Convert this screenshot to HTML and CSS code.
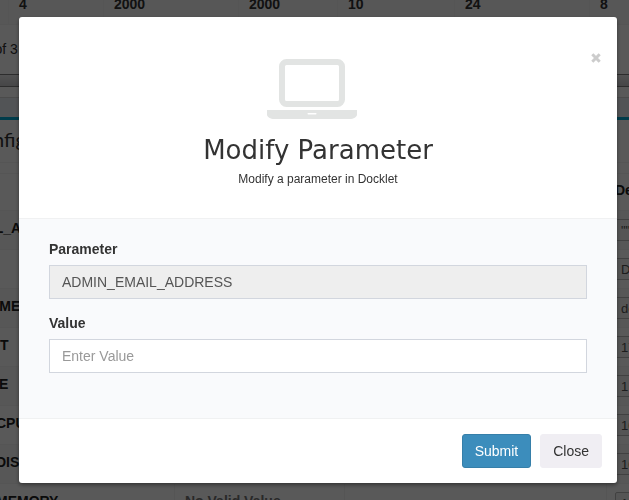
FILE: index.html
```
<!DOCTYPE html>
<html lang="en">
<head>
<meta charset="utf-8">
<title>Modify Parameter</title>
<link rel="stylesheet" href="styles.css">
</head>
<body>
<main class="page">
  <table class="grid limits">
    <tbody><tr><td></td><td>4</td><td>2000</td><td>2000</td><td>10</td><td>24</td><td>8</td></tr></tbody>
  </table>
  <p class="count">Showing 1 to 3 of 3</p>
  <div class="splitter"></div>
  <div class="strip"></div>
  <section class="box">
    <h2 class="box-title">Docklet Config</h2>
    <table class="grid config">
      <thead><tr><th></th><th></th><th></th><th>Default</th></tr></thead>
      <tbody>
        <tr><td>ADMIN_EMAIL_ADDRESS</td><td></td><td></td><td><input aria-label="Default 1" value='""'></td></tr>
        <tr><td>TITLE</td><td></td><td></td><td><input aria-label="Default 2" value="Docklet"></td></tr>
        <tr><td>MACHINE_NAME</td><td></td><td></td><td><input aria-label="Default 3" value="docklet"></td></tr>
        <tr><td>IDLE_TIMEOUT</td><td></td><td></td><td><input aria-label="Default 4" value="17"></td></tr>
        <tr><td>DEFAULT_SIZE</td><td></td><td></td><td><input aria-label="Default 5" value="1"></td></tr>
        <tr><td>CONTAINER_CPU</td><td></td><td></td><td><input aria-label="Default 6" value="10"></td></tr>
        <tr><td>CONTAINER_DISK</td><td></td><td></td><td><input aria-label="Default 7" value="10"></td></tr>
        <tr><td>CONTAINER_MEMORY</td><td class="empty">No Valid Value</td><td></td><td><input aria-label="Default 8" value="10"></td></tr>
      </tbody>
    </table>
  </section>
</main>
<div class="backdrop">
  <form class="modal" role="dialog" aria-labelledby="title">
    <header class="modal-header">
      <button class="dismiss" type="button" aria-label="Dismiss">
        <svg width="10" height="10" viewBox="0 0 10 10"><path d="M1.300 1.300l7.400 7.400M8.700 1.300l-7.400 7.400" stroke="currentColor" stroke-width="3"/></svg>
      </button>
      <svg class="laptop" width="90" height="60" viewBox="0 0 90 60" fill="currentColor" fill-rule="evenodd">
        <path d="M19.500 0h51a7.500 7.500 0 0 1 7.500 7.500v33a7.500 7.500 0 0 1-7.500 7.500h-51a7.500 7.500 0 0 1-7.500-7.500v-33a7.500 7.500 0 0 1 7.500-7.500zM19.500 6a1.500 1.500 0 0 0-1.500 1.500v33a1.500 1.500 0 0 0 1.500 1.500h51a1.500 1.500 0 0 0 1.500-1.500v-33a1.500 1.500 0 0 0-1.500-1.500z"/>
        <path d="M0 51h90v4.500c0 2.500-3.400 4.500-7.500 4.500h-75c-4.100 0-7.500-2-7.500-4.500zM41.200 54a.7.7 0 0 0 0 1.500h7.600a.7.7 0 0 0 0-1.500z"/>
      </svg>
      <h1 class="title" id="title">Modify Parameter</h1>
      <p class="subtitle">Modify a parameter in Docklet</p>
    </header>
    <div class="modal-body">
      <div class="field">
        <label for="param">Parameter</label>
        <input id="param" type="text" value="ADMIN_EMAIL_ADDRESS" readonly>
      </div>
      <div class="field">
        <label for="value">Value</label>
        <input id="value" type="text" placeholder="Enter Value">
      </div>
    </div>
    <footer class="modal-footer">
      <button class="btn primary" type="submit">Submit</button>
      <button class="btn" type="button">Close</button>
    </footer>
  </form>
</div>
</body>
</html>
```
FILE: styles.css
```
* { box-sizing: border-box; }
html, body { height: 100%; }
body {
  margin: 0;
  overflow: hidden;
  color: #333;
  background: #fff;
  font: 14px/20px "Liberation Sans", Arial, sans-serif;
}
input, button { font: inherit; }

/* Page behind the dialog, scrolled to the right */
.page {
  height: 100%;
  overflow: hidden;
  margin-left: -105px;
  margin-right: -200px;
}
.grid {
  width: 100%;
  table-layout: fixed;
  border-collapse: collapse;
  font-weight: bold;
}
.grid td, .grid th {
  padding: 0 10px;
  border: 1px solid #f4f4f4;
  text-align: left;
}
.limits tr { height: 32px; background: #f9f9f9; }
.limits { margin-top: -8px; color: #333; }
.limits td { padding-bottom: 10px; }
.limits td:nth-child(1) { width: 113px; }
.limits td:nth-child(2) { width: 95px; }
.limits td:nth-child(3) { width: 135px; }
.limits td:nth-child(4) { width: 99px; }
.limits td:nth-child(5) { width: 117px; }
.limits td:nth-child(6) { width: 135px; }
.count { margin: 0; padding: 14px 3px 15px; }
.splitter {
  height: 13px;
  border: 1px solid #808080;
  background: linear-gradient(#eee, #c8c8cc);
}
.strip {
  height: 20px;
  margin-top: 10px;
  border-top: 1px solid #d8d8d8;
  background: #ecf0f5;
}
.box { border-top: 3px solid #00acd6; background: #fff; }
.box-title {
  margin: 0 0 10px;
  padding: 8px 0 12px;
  border-bottom: 1px solid #f4f4f4;
  font: 20px/22px Lato, sans-serif;
}
.config th { height: 37px; }
.config th:nth-child(1) { width: 279px; }
.config th:nth-child(2) { width: 170px; }
.config th:nth-child(3) { width: 262px; }
.config th, .config td:first-child { color: #222; }
.config td { height: 39px; }
.grid.config th, .config tr > :nth-child(-n+2) { padding-bottom: 5px; }
.config tbody tr:nth-child(odd) { background: #f9f9f9; }
.config .empty { color: #777; }
.config input {
  display: block;
  width: 100%;
  height: 22px;
  padding: 0 5px;
  border: 1px solid #bbb;
  border-radius: 2px;
  background: #f4f4f4;
  color: #555;
  font-size: 13px;
  font-weight: normal;
}
.config tr > :last-child { padding-left: 8px; }

/* Dialog */
.backdrop {
  position: fixed;
  inset: 0;
  padding: 17px 12px 17px 19px;
  background: rgba(0, 0, 0, .65);
}
.modal {
  overflow: hidden;
  border-radius: 3px;
  background: #fff;
  box-shadow: 0 2px 4px rgba(0, 0, 0, .4);
}
.modal-header {
  position: relative;
  display: flex;
  flex-direction: column;
  align-items: center;
  padding: 42px 15px 29px;
}
.dismiss {
  position: absolute;
  top: 36px;
  right: 16px;
  display: flex;
  padding: 0;
  border: 0;
  background: none;
  color: #ccc;
}
.laptop { margin-right: 12px; color: #e2e4e3; }
.title {
  margin: 16px 0 0;
  font: 26px/30px "DejaVu Sans", sans-serif;
}
.subtitle { margin: 4px 0 0; font-size: 12px; }
.modal-body {
  padding: 20px 30px 31px;
  border-top: 1px solid #f0f1f2;
  border-bottom: 1px solid #f0f1f2;
  background: #f9fafc;
}
.field { margin-bottom: 14px; }
.field label { display: block; margin-bottom: 6px; font-weight: bold; }
.field input {
  display: block;
  width: 100%;
  height: 34px;
  padding: 6px 12px;
  border: 1px solid #d2d6de;
  border-radius: 0;
  background: #fff;
  color: #555;
}
.field input:read-only { background: #eee; }
.field input::placeholder { color: #999; }
.modal-footer {
  display: flex;
  justify-content: flex-end;
  gap: 9px;
  padding: 15px;
}
.btn {
  padding: 6px 12px;
  border: 1px solid #f0eef3;
  border-radius: 3px;
  background: #f0eef3;
  color: #333;
}
.btn.primary { border-color: #367fa9; background: #3c8dbc; color: #fff; }
```
